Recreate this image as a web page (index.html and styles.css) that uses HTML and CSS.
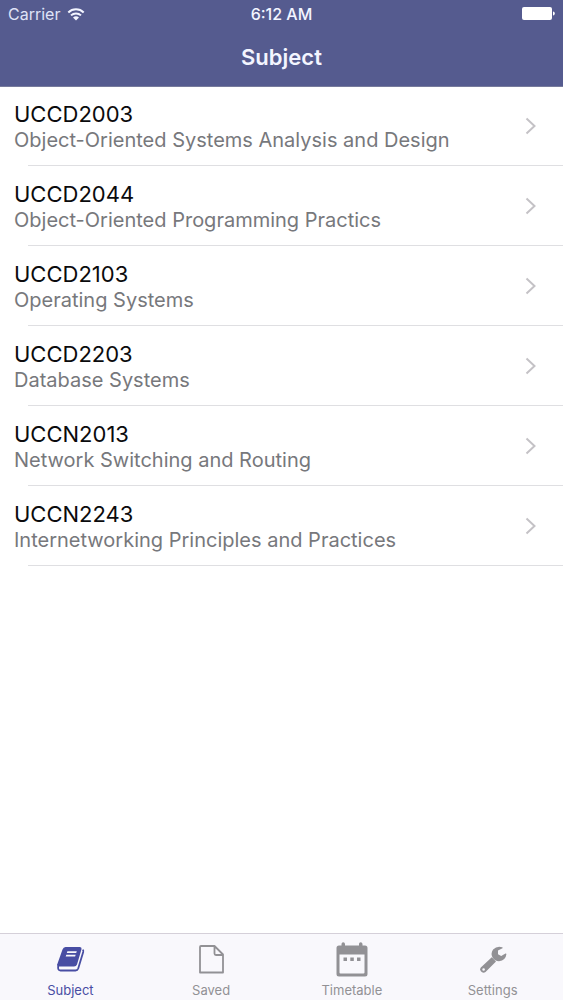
FILE: index.html
```html
<!DOCTYPE html>
<html lang="en">
<head>
<meta charset="utf-8">
<meta name="viewport" content="width=device-width, initial-scale=1">
<title>Subject</title>
<link rel="stylesheet" href="styles.css">
</head>
<body>
<div class="app">
  <header class="header">
    <div class="status">
      <div class="carrier">
        <span>Carrier</span>
        <svg class="wifi" viewBox="0 0 18 13" aria-hidden="true">
          <path d="M1.300 4.500a11 11 0 0 1 15.400 0M4 7.400a7.200 7.200 0 0 1 10 0" fill="none" stroke="currentColor" stroke-width="2"/>
          <path d="M9 12.500 6 9.600a4.300 4.300 0 0 1 6 0z" fill="currentColor"/>
        </svg>
      </div>
      <time class="clock">6:12 AM</time>
      <svg class="battery" viewBox="0 0 34 14" aria-hidden="true">
        <rect x="1" y="0" width="30" height="13" rx="2" fill="currentColor"/>
        <path d="M32 4.500q1.800 0 1.800 2t-1.800 2z" fill="currentColor"/>
      </svg>
    </div>
    <h1 class="title">Subject</h1>
  </header>
  <main class="content">
    <ul class="list">
      <li class="item"><a class="row" href="#"><span class="text"><span class="code">UCCD2003</span><span class="name">Object-Oriented Systems Analysis and Design</span></span><svg class="chevron" viewBox="0 0 12 18" aria-hidden="true"><path d="m1.500 1.500 8 7.500-8 7.500"/></svg></a></li>
      <li class="item"><a class="row" href="#"><span class="text"><span class="code">UCCD2044</span><span class="name">Object-Oriented Programming Practics</span></span><svg class="chevron" viewBox="0 0 12 18" aria-hidden="true"><path d="m1.500 1.500 8 7.500-8 7.500"/></svg></a></li>
      <li class="item"><a class="row" href="#"><span class="text"><span class="code">UCCD2103</span><span class="name">Operating Systems</span></span><svg class="chevron" viewBox="0 0 12 18" aria-hidden="true"><path d="m1.500 1.500 8 7.500-8 7.500"/></svg></a></li>
      <li class="item"><a class="row" href="#"><span class="text"><span class="code">UCCD2203</span><span class="name">Database Systems</span></span><svg class="chevron" viewBox="0 0 12 18" aria-hidden="true"><path d="m1.500 1.500 8 7.500-8 7.500"/></svg></a></li>
      <li class="item"><a class="row" href="#"><span class="text"><span class="code">UCCN2013</span><span class="name">Network Switching and Routing</span></span><svg class="chevron" viewBox="0 0 12 18" aria-hidden="true"><path d="m1.500 1.500 8 7.500-8 7.500"/></svg></a></li>
      <li class="item"><a class="row" href="#"><span class="text"><span class="code">UCCN2243</span><span class="name">Internetworking Principles and Practices</span></span><svg class="chevron" viewBox="0 0 12 18" aria-hidden="true"><path d="m1.500 1.500 8 7.500-8 7.500"/></svg></a></li>
    </ul>
  </main>
  <nav class="tabs" aria-label="Main">
    <a class="tab active" href="#" aria-current="page">
      <svg class="icon" viewBox="0 0 36 36" aria-hidden="true">
        <path fill="currentColor" fill-rule="evenodd" d="M13.500 6H28q2 .2 1.500 2.200L25 23.500Q24.400 25.500 22 25.500H6.500L5 24 10.500 8.500Q11.400 6 13.500 6zM15.400 10.200l-.6 1.900h9.400l.6-1.900zM14.300 13.700l-.6 1.900h9.400l.6-1.900z"/>
        <path fill="none" stroke="currentColor" stroke-width="1.800" stroke-linejoin="round" d="M6.500 23.500Q5 29.500 8.500 29.500H23.500q2 0 2.700-2L31.200 11q.4-1.500-.6-2.200"/>
      </svg>
      <span>Subject</span>
    </a>
    <a class="tab" href="#">
      <svg class="icon" viewBox="0 0 36 36" aria-hidden="true">
        <path fill="none" stroke="currentColor" stroke-width="1.800" stroke-linejoin="round" d="M8 5h13.500l8.500 8.500V31.500H7V6q0-1 1-1zM21.500 5v7.500q0 1.500 1.500 1.500h7"/>
      </svg>
      <span>Saved</span>
    </a>
    <a class="tab" href="#">
      <svg class="icon" viewBox="0 0 36 36" aria-hidden="true">
        <path fill="currentColor" fill-rule="evenodd" d="M5 4.500h2.500V3q0-1.800 1.700-1.800T11 3v1.500h14V3q0-1.800 1.700-1.800T28.500 3v1.500H31q2.500 0 2.500 2.500v26q0 2.500-2.500 2.500H5Q2.500 35.500 2.500 33V7Q2.500 4.500 5 4.500zM5.500 13.500v18q0 1 1 1h23q1 0 1-1v-18z"/>
        <path fill="currentColor" d="M9.500 16.500H13V20H9.500zm6.800 0h3.500V20h-3.500zm6.700 0h3.500V20H23z"/>
      </svg>
      <span>Timetable</span>
    </a>
    <a class="tab" href="#">
      <svg class="icon" viewBox="0 0 36 36" aria-hidden="true">
        <path fill="currentColor" fill-rule="evenodd" d="m16.800 16.300 4.200 4.200L10.500 31q-2 1.500-3.800-.1l-1-1q-1.500-1.800.1-3.500zM8.600 27.200a1.300 1.300 0 1 0 0 2.600 1.300 1.300 0 0 0 0-2.600z"/>
        <path fill="currentColor" d="M27.500 7.200 23 9.500v3.700l3.200 1.900 4.300-2.600q.9-.4.900.8-.7 6.200-7.400 6.900-4.200 0-6.300-3.400-2.400-4.400.4-8.300Q22 4.500 27.200 6.200q.9.500.3 1z"/>
      </svg>
      <span>Settings</span>
    </a>
  </nav>
</div>
</body>
</html>
```
FILE: styles.css
```css
* {
  box-sizing: border-box;
}

body {
  margin: 0;
  background: #fff;
  color: #0b0b0d;
  font-family: Inter, "Liberation Sans", sans-serif;
}

a {
  color: inherit;
  text-decoration: none;
}

.app {
  display: flex;
  flex-direction: column;
  min-height: 100vh;
}

.header {
  padding-bottom: 12px;
  border-bottom: 1px solid #777b9c;
  background: #555b8f;
  color: #f3f5ff;
}

.status {
  display: grid;
  grid-template-columns: 1fr auto 1fr;
  align-items: center;
  height: 28px;
  padding: 0 8px;
  font-size: 16px;
  line-height: 28px;
}

.carrier {
  display: flex;
  align-items: center;
  gap: 7px;
  color: #dfe3f7;
}

.wifi {
  width: 18px;
  height: 13px;
  color: #f3f5ff;
}

.clock {
  font-weight: 500;
}

.battery {
  justify-self: end;
  width: 34px;
  height: 14px;
  color: #fff;
}

.title {
  margin: 0;
  padding-top: 12px;
  font-size: 22px;
  font-weight: 600;
  line-height: 34px;
  text-align: center;
}

.content {
  flex: 1;
}

.list {
  margin: 0;
  padding: 0;
  list-style: none;
}

.row {
  display: flex;
  align-items: center;
  justify-content: space-between;
  padding: 13px 26px 13px 14px;
}

.item::after {
  content: "";
  display: block;
  height: 1px;
  margin-left: 28px;
  background: #dfdfe2;
}

.item + .item .row {
  padding-top: 14px;
}

.text {
  display: flex;
  flex-direction: column;
}

.code {
  font-size: 22px;
  line-height: 28px;
}

.name {
  color: #77787c;
  font-size: 20px;
  line-height: 24px;
}

.chevron {
  width: 12px;
  height: 18px;
  fill: none;
  stroke: #c4c2c6;
  stroke-width: 2;
}

.tabs {
  display: grid;
  grid-template-columns: repeat(4, 1fr);
  border-top: 1px solid #d5d0d9;
  background: #f9f8fc;
}

.tab {
  display: flex;
  flex-direction: column;
  align-items: center;
  gap: 3px;
  padding-top: 7px;
  color: #929195;
  font-size: 13px;
  line-height: 20px;
}

.active {
  color: #484da3;
}

.icon {
  width: 36px;
  height: 36px;
}
```
